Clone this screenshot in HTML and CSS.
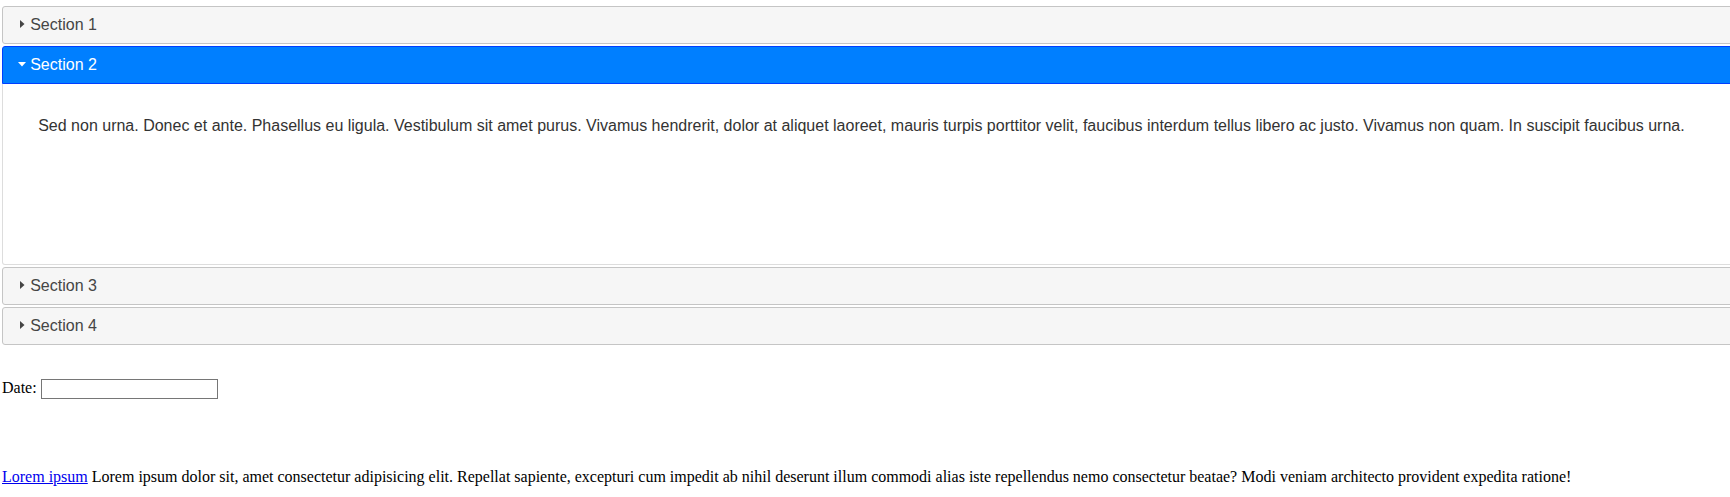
FILE: index.html
```html
<!DOCTYPE html>
<html>
<head>
<meta charset="utf-8">
<title>Accordion</title>
<link rel="stylesheet" href="styles.css">
</head>
<body>
<div class="accordion">
  <h3 class="acc-header">
    <svg class="acc-icon" viewBox="0 0 16 16" width="16" height="16"><polygon points="6,4 10.5,8 6,12" class="tri"/></svg>Section 1
  </h3>
  <h3 class="acc-header active">
    <svg class="acc-icon" viewBox="0 0 16 16" width="16" height="16"><polygon points="4,6 12,6 8,10.5" class="tri"/></svg>Section 2
  </h3>
  <div class="acc-panel">
    <p>Sed non urna. Donec et ante. Phasellus eu ligula. Vestibulum sit amet purus. Vivamus hendrerit, dolor at aliquet laoreet, mauris turpis porttitor velit, faucibus interdum tellus libero ac justo. Vivamus non quam. In suscipit faucibus urna.</p>
  </div>
  <h3 class="acc-header">
    <svg class="acc-icon" viewBox="0 0 16 16" width="16" height="16"><polygon points="6,4 10.5,8 6,12" class="tri"/></svg>Section 3
  </h3>
  <h3 class="acc-header">
    <svg class="acc-icon" viewBox="0 0 16 16" width="16" height="16"><polygon points="6,4 10.5,8 6,12" class="tri"/></svg>Section 4
  </h3>
</div>
<p class="date-row">Date: <input type="text" class="date-input"></p>
<p class="lorem"><a href="#">Lorem ipsum</a> Lorem ipsum dolor sit, amet consectetur adipisicing elit. Repellat sapiente, excepturi cum impedit ab nihil deserunt illum commodi alias iste repellendus nemo consectetur beatae? Modi veniam architecto provident expedita ratione!</p>
</body>
</html>
```
FILE: styles.css
```css
html, body {
  overflow-x: hidden;
}
body {
  margin: 0;
  padding: 4px 0 0 2px;
  font-family: "Liberation Serif", "Times New Roman", serif;
  font-size: 16px;
  color: #000;
}
.accordion {
  width: calc(100% + 20px);
  font-family: "Liberation Sans", Arial, Helvetica, sans-serif;
  font-size: 16px;
}
.acc-header {
  display: block;
  margin: 2px 0 0 0;
  padding: 8px 8px 8px 11.2px;
  font-size: 16px;
  font-weight: normal;
  line-height: 20px;
  color: #454545;
  background: #f6f6f6;
  border: 1px solid #c5c5c5;
  border-radius: 3px;
  cursor: pointer;
}
.acc-header.active {
  color: #fff;
  background: #007fff;
  border-color: #003eff;
  border-radius: 3px 3px 0 0;
}
.acc-icon {
  display: inline-block;
  vertical-align: middle;
  margin-top: -4px;
  width: 16px;
  height: 16px;
}
.tri {
  fill: #444;
}
.active .tri {
  fill: #fff;
}
.acc-panel {
  height: 148px;
  padding: 16px 35.2px;
  border: 1px solid #ddd;
  border-top: 0;
  border-radius: 0 0 3px 3px;
  background: #fff;
  color: #333;
  overflow: hidden;
}
.acc-panel p {
  margin: 17px 0 16px;
  line-height: 18px;
}
.date-row {
  margin: 33px 0 0 0;
  line-height: 20px;
}
.date-input {
  box-sizing: border-box;
  width: 177px;
  height: 20px;
  margin: 0;
  padding: 1px 2px;
  border: 1px solid #767676;
  border-radius: 0;
  font-family: "Liberation Sans", Arial, sans-serif;
  font-size: 13px;
  vertical-align: middle;
}
.lorem {
  margin: 69px 0 0 0;
}
.lorem a {
  color: #0000ee;
}
```
